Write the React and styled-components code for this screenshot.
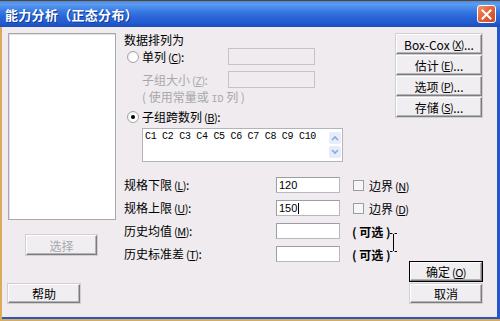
import styled, { createGlobalStyle } from 'styled-components';

const GlobalStyle = createGlobalStyle`
  html, body { margin: 0; padding: 0; }
  body {
    width: 500px;
    height: 321px;
    overflow: hidden;
    background: #d9ab5a;
    font-family: "Noto Sans CJK SC", "Liberation Sans", sans-serif;
    font-size: 12px;
    color: #000;
  }
`;

const Screen = styled.div`
  position: relative;
  width: 500px;
  height: 321px;
  box-sizing: border-box;
  border-top: 1px solid #5b4521;
  background: #d9ab5a;
  display: flex;
  flex-direction: column;
`;

const TitleBar = styled.div`
  height: 26px;
  flex-shrink: 0;
  display: flex;
  align-items: center;
  justify-content: space-between;
  padding: 0 4px 0 5px;
  background: linear-gradient(#4a8ae8 0%, #5c9cf2 12%, #3e7fe6 35%, #2a66d8 60%, #225bd0 85%, #1a4cb8 100%);
`;

const Title = styled.div`
  color: #fff;
  font-weight: bold;
  font-size: 13px;
  letter-spacing: 0.3px;
  text-shadow: 1px 1px 0 #0f3a98;
`;

const CloseBtn = styled.div`
  width: 19px;
  height: 18px;
  box-sizing: border-box;
  border: 1px solid #fff;
  border-radius: 3px;
  background: linear-gradient(135deg, #f0946c 0%, #e4643c 45%, #cc4a22 100%);
  display: flex;
  align-items: center;
  justify-content: center;
`;

const Window = styled.div`
  margin-left: 2px;
  box-sizing: border-box;
  width: 498px;
  height: 292px;
  background: #efebef;
  border-right: 3px solid #2457cb;
  border-bottom: 2px solid #2457cb;
  display: flex;
  padding: 6px 15px 14px 6px;
`;

const LeftCol = styled.div`
  width: 108px;
  flex-shrink: 0;
  display: flex;
  flex-direction: column;
`;

const ListBox = styled.div`
  height: 187px;
  background: #fff;
  box-sizing: border-box;
  border: 1px solid #a9a9ad;
  box-shadow: inset 1px 1px 0 #e2e2e6;
`;

const Button = styled.div`
  box-sizing: border-box;
  flex-shrink: 0;
  width: ${p => p.$w || 84}px;
  height: ${p => p.$h || 20}px;
  display: flex;
  align-items: center;
  justify-content: center;
  background: #f0eef0;
  border: 1px solid;
  border-color: #ffffff #7c7c7c #7c7c7c #ffffff;
  box-shadow: ${p => (p.$default ? '0 0 0 1px #000, inset -1px -1px 0 #b4b4b8' : 'inset -1px -1px 0 #b4b4b8, 0 0 0 1px #d0d0d4')};
  color: ${p => (p.$disabled ? '#a8a8ac' : '#000')};
  font-size: 12px;
  white-space: nowrap;
  margin-top: ${p => p.$mt || 0}px;
  margin-left: ${p => p.$ml || 0}px;
`;

const Key = styled.span`
  text-decoration: underline;
`;

const Paren = styled.span`
  font-size: 11px;
  letter-spacing: -0.5px;
  margin-left: 2px;
`;

const MiddleCol = styled.div`
  width: 264px;
  flex-shrink: 0;
  margin-left: 8px;
  display: flex;
  flex-direction: column;
`;

const Heading = styled.div`
  height: 15px;
  line-height: 14px;
`;

const OptionRow = styled.div`
  display: grid;
  grid-template-columns: 18px 86px 87px;
  align-items: center;
  height: 17px;
  margin-top: ${p => p.$mt || 0}px;
  color: ${p => (p.$grey ? '#a8a8ac' : '#000')};
`;

const Radio = styled.div`
  width: 12px;
  height: 12px;
  margin-left: 3px;
  box-sizing: border-box;
  border-radius: 50%;
  border: 1px solid #a4a4a8;
  background: radial-gradient(circle at 60% 60%, #ffffff 40%, #e4e4e8 100%);
  display: flex;
  align-items: center;
  justify-content: center;
  &::after {
    content: '';
    display: ${p => (p.$on ? 'block' : 'none')};
    width: 4px;
    height: 4px;
    border-radius: 50%;
    background: #000;
  }
`;

const DisabledInput = styled.div`
  height: 17px;
  box-sizing: border-box;
  border: 1px solid #c4c4c8;
  background: #efebef;
`;

const Note = styled.div`
  padding-left: 18px;
  margin-top: 2px;
  height: 14px;
  line-height: 14px;
  color: #a8a8ac;
  font-size: 12px;
  white-space: nowrap;
`;

const Mono = styled.span`
  font-family: "Liberation Mono", monospace;
  font-size: 10px;
`;

const ColumnsBox = styled.div`
  margin: 3px 0 0 18px;
  width: 201px;
  height: 34px;
  box-sizing: border-box;
  background: #fff;
  border: 1px solid #b0b4bc;
  display: flex;
  justify-content: space-between;
  padding: 2px 1px 0 2px;
`;

const ColumnsText = styled.div`
  font-family: "Liberation Mono", monospace;
  font-size: 10px;
  letter-spacing: -0.3px;
  line-height: 12px;
`;

const Scroll = styled.div`
  display: flex;
  flex-direction: column;
  gap: 2px;
  padding-top: 1px;
`;

const ScrollBtn = styled.div`
  width: 12px;
  height: 12px;
  border-radius: 2px;
  background: #e6ecfa;
  display: flex;
  align-items: center;
  justify-content: center;
`;

const SpecGrid = styled.div`
  margin-top: 15px;
  display: grid;
  grid-template-columns: 152px 64px auto;
  grid-auto-rows: 16px;
  row-gap: 7px;
  align-items: center;
`;

const SpecLabel = styled.div`
  white-space: nowrap;
  line-height: 16px;
`;

const TextInput = styled.div`
  height: 16px;
  box-sizing: border-box;
  background: #fff;
  border: 1px solid #b8b8c0;
  border-top-color: #9c9ca4;
  border-left-color: #9c9ca4;
  font-family: "Liberation Sans", sans-serif;
  font-size: 11px;
  line-height: 14px;
  padding-left: 2px;
  display: flex;
  align-items: center;
`;

const Caret = styled.span`
  display: inline-block;
  width: 1px;
  height: 11px;
  background: #000;
  margin-left: 1px;
`;

const Bound = styled.div`
  display: flex;
  align-items: center;
  gap: 5px;
  padding-left: 13px;
  white-space: nowrap;
`;

const Check = styled.div`
  width: 11px;
  height: 11px;
  box-sizing: border-box;
  border: 1px solid #9c9ca4;
  background: #f6f6f8;
`;

const Optional = styled.div`
  padding-left: 12px;
  font-weight: bold;
  white-space: nowrap;
`;

const RightCol = styled.div`
  width: 86px;
  flex-shrink: 0;
  margin-left: auto;
  display: flex;
  flex-direction: column;
  align-items: flex-end;
  gap: 1px;
  padding-top: 1px;
`;

const BottomButtons = styled.div`
  margin-top: auto;
  display: flex;
  flex-direction: column;
  gap: 3px;
`;

const Cursor = styled.svg`
  position: absolute;
  left: 389px;
  top: 232px;
`;

const Label = ({ text, k, tail = ':' }) => (
  <span>
    {text}
    <Paren>(<Key>{k}</Key>)</Paren>
    {tail}
  </span>
);

export default function App() {
  return (
    <>
      <GlobalStyle />
      <Screen>
        <TitleBar>
          <Title>能力分析（正态分布）</Title>
          <CloseBtn>
            <svg width="11" height="11" viewBox="0 0 11 11">
              <path d="M1.5 1.5 L9.5 9.5 M9.5 1.5 L1.5 9.5" stroke="#fff" strokeWidth="2" strokeLinecap="square" />
            </svg>
          </CloseBtn>
        </TitleBar>
        <Window>
          <LeftCol>
            <ListBox />
            <Button $w={71} $mt={15} $ml={18} $disabled>选择</Button>
            <Button $w={72} $h={19} style={{ marginTop: 'auto' }}>帮助</Button>
          </LeftCol>

          <MiddleCol>
            <Heading>数据排列为</Heading>
            <OptionRow>
              <Radio />
              <Label text="单列" k="C" />
              <DisabledInput />
            </OptionRow>
            <OptionRow $grey $mt={6}>
              <span />
              <Label text="子组大小" k="Z" />
              <DisabledInput />
            </OptionRow>
            <Note>( 使用常量或 <Mono>ID</Mono> 列 )</Note>
            <OptionRow $mt={4}>
              <Radio $on />
              <span style={{ gridColumn: 'span 2' }}><Label text="子组跨数列" k="B" /></span>
            </OptionRow>
            <ColumnsBox>
              <ColumnsText>C1 C2 C3 C4 C5 C6 C7 C8 C9 C10</ColumnsText>
              <Scroll>
                <ScrollBtn>
                  <svg width="8" height="6" viewBox="0 0 8 6">
                    <path d="M1 5 L4 2 L7 5" stroke="#8aa6e0" strokeWidth="1.6" fill="none" />
                  </svg>
                </ScrollBtn>
                <ScrollBtn>
                  <svg width="8" height="6" viewBox="0 0 8 6">
                    <path d="M1 1 L4 4 L7 1" stroke="#8aa6e0" strokeWidth="1.6" fill="none" />
                  </svg>
                </ScrollBtn>
              </Scroll>
            </ColumnsBox>

            <SpecGrid>
              <SpecLabel><Label text="规格下限" k="L" /></SpecLabel>
              <TextInput>120</TextInput>
              <Bound><Check /><Label text="边界" k="N" tail="" /></Bound>

              <SpecLabel><Label text="规格上限" k="U" /></SpecLabel>
              <TextInput>150<Caret /></TextInput>
              <Bound><Check /><Label text="边界" k="D" tail="" /></Bound>

              <SpecLabel><Label text="历史均值" k="M" /></SpecLabel>
              <TextInput />
              <Optional>( 可选 )</Optional>

              <SpecLabel><Label text="历史标准差" k="T" /></SpecLabel>
              <TextInput />
              <Optional>( 可选 )</Optional>
            </SpecGrid>
          </MiddleCol>

          <RightCol>
            <Button $w={86}>Box-Cox<Paren>(<Key>X</Key>)</Paren>...</Button>
            <Button $w={86}>估计<Paren>(<Key>E</Key>)</Paren>...</Button>
            <Button $w={86}>选项<Paren>(<Key>P</Key>)</Paren>...</Button>
            <Button $w={86}>存储<Paren>(<Key>S</Key>)</Paren>...</Button>
            <BottomButtons>
              <Button $w={72} $h={19} $default>确定<Paren>(<Key>O</Key>)</Paren></Button>
              <Button $w={72} $h={19}>取消</Button>
            </BottomButtons>
          </RightCol>
        </Window>
        <Cursor width="9" height="19" viewBox="0 0 9 19">
          <path d="M1 0.5 H3.5 M5.5 0.5 H8 M4.5 1 V18 M1 18.5 H3.5 M5.5 18.5 H8" stroke="#000" strokeWidth="1" fill="none" />
        </Cursor>
      </Screen>
    </>
  );
}
